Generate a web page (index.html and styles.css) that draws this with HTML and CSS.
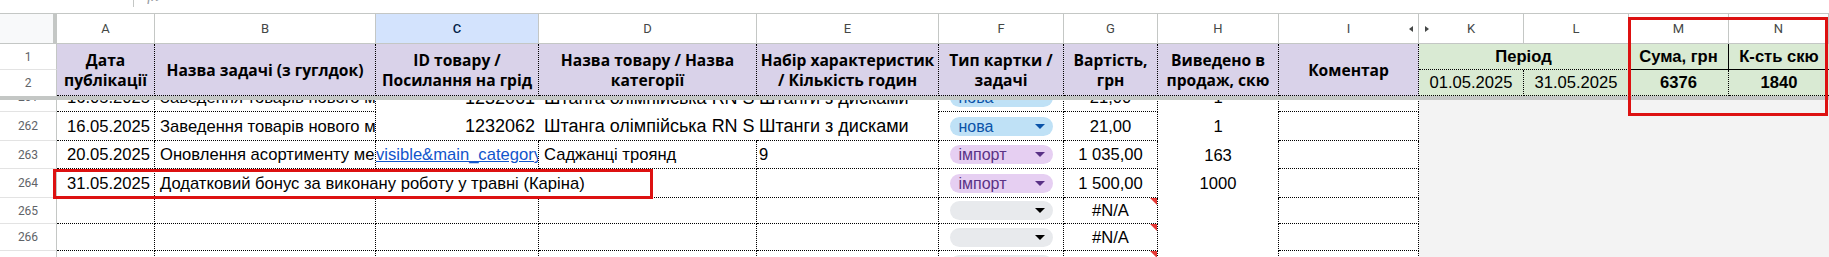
FILE: index.html
```html
<!DOCTYPE html>
<html lang="uk">
<head>
<meta charset="utf-8">
<title>Sheet</title>
<link rel="stylesheet" href="styles.css">
</head>
<body>
<div class="sheet">
  <div class="topbar">
    <div class="namebox"><span>E270</span></div>
    <div class="fx"><span>fx</span></div>
  </div>

  <div class="grid colheads">
    <div class="corner"></div>
    <div class="ch">A</div>
    <div class="ch">B</div>
    <div class="ch sel">C</div>
    <div class="ch">D</div>
    <div class="ch">E</div>
    <div class="ch">F</div>
    <div class="ch">G</div>
    <div class="ch">H</div>
    <div class="ch ch-i">I<span class="arr-l"></span></div>
    <div class="ch ch-k"><span class="arr-r"></span>K</div>
    <div class="ch">L</div>
    <div class="ch">M</div>
    <div class="ch">N</div>
  </div>

  <div class="grid frozen">
    <div class="rh rh1">1</div>
    <div class="hd">Дата<br>публікації</div>
    <div class="hd">Назва задачі (з гуглдок)</div>
    <div class="hd">ID товару /<br>Посилання на грід</div>
    <div class="hd">Назва товару / Назва<br>категорії</div>
    <div class="hd">Набір характеристик<br>/ Кількість годин</div>
    <div class="hd">Тип картки /<br>задачі</div>
    <div class="hd">Вартість,<br>грн</div>
    <div class="hd">Виведено в<br>продаж, скю</div>
    <div class="hd">Коментар</div>
    <div class="gr gr-period">Період</div>
    <div class="gr b solid-r solid-b">Сума, грн</div>
    <div class="gr b solid-b nr">К-сть скю</div>
    <div class="rh rh2">2</div>
    <div class="gr gr-k">01.05.2025</div>
    <div class="gr">31.05.2025</div>
    <div class="gr b">6376</div>
    <div class="gr b nr">1840</div>
  </div>

  <div class="freezebar"></div>

  <div class="body">
    <div class="grid row h29 first">
      <div class="rh">261</div>
      <div class="c r">16.05.2025</div>
      <div class="c">Заведення товарів нового магазину</div>
      <div class="c r nr nb big">1232061</div>
      <div class="c nr nb big">Штанга олімпійська RN S 20 кг</div>
      <div class="c nb e big">Штанги з дисками</div>
      <div class="c f"><span class="chip blue">нова<i></i></span></div>
      <div class="c ctr">21,00</div>
      <div class="c ctr h">1</div>
      <div class="c"></div>
      <div class="gray"></div>
    </div>
    <div class="grid row h29">
      <div class="rh">262</div>
      <div class="c r">16.05.2025</div>
      <div class="c">Заведення товарів нового магазину</div>
      <div class="c r nr big">1232062</div>
      <div class="c nr big">Штанга олімпійська RN S 20 кг</div>
      <div class="c e big">Штанги з дисками</div>
      <div class="c f"><span class="chip blue">нова<i></i></span></div>
      <div class="c ctr">21,00</div>
      <div class="c ctr h">1</div>
      <div class="c"></div>
      <div class="gray"></div>
    </div>
    <div class="grid row h28">
      <div class="rh">263</div>
      <div class="c r">20.05.2025</div>
      <div class="c">Оновлення асортименту меблів</div>
      <div class="c link"><a>visible&amp;main_category=2417</a></div>
      <div class="c">Саджанці троянд</div>
      <div class="c e">9</div>
      <div class="c f"><span class="chip purple">імпорт<i></i></span></div>
      <div class="c ctr">1 035,00</div>
      <div class="c ctr h">163</div>
      <div class="c"></div>
      <div class="gray"></div>
    </div>
    <div class="grid row h29">
      <div class="rh">264</div>
      <div class="c r">31.05.2025</div>
      <div class="c span3">Додатковий бонус за виконану роботу у травні (Каріна)</div>
      <div class="c"></div>
      <div class="c f"><span class="chip purple">імпорт<i></i></span></div>
      <div class="c ctr">1 500,00</div>
      <div class="c ctr h">1000</div>
      <div class="c"></div>
      <div class="gray"></div>
    </div>
    <div class="grid row h26">
      <div class="rh">265</div>
      <div class="c"></div>
      <div class="c"></div>
      <div class="c"></div>
      <div class="c"></div>
      <div class="c"></div>
      <div class="c f"><span class="chip grey"><i></i></span></div>
      <div class="c ctr err">#N/A</div>
      <div class="c h"></div>
      <div class="c"></div>
      <div class="gray"></div>
    </div>
    <div class="grid row h27">
      <div class="rh">266</div>
      <div class="c"></div>
      <div class="c"></div>
      <div class="c"></div>
      <div class="c"></div>
      <div class="c"></div>
      <div class="c f"><span class="chip grey"><i></i></span></div>
      <div class="c ctr err">#N/A</div>
      <div class="c h"></div>
      <div class="c"></div>
      <div class="gray"></div>
    </div>
    <div class="grid row h27">
      <div class="rh">267</div>
      <div class="c"></div>
      <div class="c"></div>
      <div class="c"></div>
      <div class="c"></div>
      <div class="c"></div>
      <div class="c f"><span class="chip grey"><i></i></span></div>
      <div class="c ctr err">#N/A</div>
      <div class="c h"></div>
      <div class="c"></div>
      <div class="gray"></div>
    </div>
  </div>

  <div class="mark mark-sum"></div>
  <div class="mark mark-row"></div>
</div>
</body>
</html>
```

FILE: styles.css
```css
* { box-sizing: border-box; }

body {
  margin: 0;
  background: #fff;
}

.sheet {
  position: relative;
  width: 1829px;
  height: 257px;
  overflow: hidden;
  font-family: "Liberation Sans", Arial, sans-serif;
  font-size: 16.6px;
  color: #000;
}

/* ---------- top (formula bar, scrolled off) ---------- */
.topbar {
  height: 14px;
  border-bottom: 1px solid #c4c7c5;
  display: flex;
  align-items: flex-start;
  overflow: hidden;
}
.namebox {
  width: 134px;
  height: 7px;
  padding-left: 20px;
  border-right: 1px solid #c4c7c5;
  overflow: hidden;
}
.namebox span {
  display: block;
  margin-top: -13px;
  font: 500 15px/16px Roboto, sans-serif;
  color: #1f1f1f;
}
.fx {
  margin-left: 13px;
  height: 4px;
  overflow: hidden;
}
.fx span {
  display: block;
  margin-top: -12px;
  font: italic 16px/16px "Liberation Serif", serif;
  color: #9aa0a6;
}

/* ---------- grid ---------- */
.grid {
  display: grid;
  grid-template-columns: 57px 98px 221px 163px 218px 182px 125px 94px 121px 140px 105px 105px 100px 100px;
}

/* column letters */
.colheads {
  height: 30px;
  border-bottom: 1px solid #c4c7c5;
}
.corner {
  background: #f8f9fa;
  border-right: 4px solid #c4c7c5;
}
.ch {
  display: flex;
  align-items: center;
  justify-content: center;
  border-right: 1px solid #c4c7c5;
  font: 13px Roboto, sans-serif;
  color: #444746;
  position: relative;
}
.ch.sel {
  background: #d3e3fd;
  color: #041e49;
  font-weight: 500;
}
.arr-l {
  position: absolute;
  right: 5px;
  top: 12px;
  border-top: 3px solid transparent;
  border-bottom: 3px solid transparent;
  border-right: 4px solid #444746;
}
.arr-r {
  position: absolute;
  left: 6px;
  top: 12px;
  border-top: 3px solid transparent;
  border-bottom: 3px solid transparent;
  border-left: 4px solid #444746;
}

/* frozen header rows */
.frozen {
  grid-template-rows: 26px 26px;
}
.rh {
  display: flex;
  align-items: center;
  justify-content: center;
  border-right: 1px solid #c4c7c5;
  border-bottom: 1px solid #e3e3e3;
  font: 12px Roboto, sans-serif;
  color: #5f6368;
  background: #fff;
}
.rh1 { grid-column: 1; grid-row: 1; }
.rh2 { grid-column: 1; grid-row: 2; border-bottom: 0; }

.hd {
  grid-row: span 2;
  display: flex;
  align-items: center;
  justify-content: center;
  text-align: center;
  background: #d9d2e9;
  border-right: 1px dotted #000;
  border-bottom: 1px dotted #000;
  font: 700 15.6px/20px "Open Sans", sans-serif;
  white-space: nowrap;
  overflow: hidden;
  padding-top: 1px;
}

.gr {
  display: flex;
  align-items: center;
  justify-content: center;
  background: #d9ead3;
  border-right: 1px dotted #000;
  border-bottom: 1px dotted #000;
  white-space: nowrap;
}
.gr.b { font-weight: 700; }
.gr-period { grid-column: 11 / span 2; grid-row: 1; font-weight: 700; }
.gr-k { grid-column: 11; grid-row: 2; }
.gr.solid-r { border-right: 1px solid #000; }
.gr.solid-b { border-bottom: 1px solid #000; }
.gr.nr { border-right: 0; }

.freezebar {
  height: 4px;
  background: #c4c7c5;
}

/* ---------- body rows ---------- */
.body {
  height: 157px;
  overflow: hidden;
}
.row.first { margin-top: -17px; }
.h29 { height: 29px; }
.h28 { height: 28px; }
.h27 { height: 27px; }
.h26 { height: 26px; }

.c {
  display: flex;
  align-items: center;
  padding: 1px 4px 0 5px;
  border-right: 1px dotted #000;
  border-bottom: 1px dotted #000;
  white-space: nowrap;
  overflow: hidden;
  position: relative;
}
.c.big { font-size: 18px; }
.c.r { justify-content: flex-end; padding-right: 4px; }
.c.ctr { justify-content: center; padding: 1px 0 0; }
.c.nr { border-right: 0; }
.c.nb { border-bottom: 0; }
.c.h { border-bottom: 0; }
.c.e { padding-left: 2px; }
.c.span3 { grid-column: span 3; }
.c.link { padding-left: 0; }
.c.link a {
  color: #1155cc;
  text-decoration: underline;
}
.c.f { justify-content: center; padding: 0; }

.gray {
  grid-column: span 4;
  background: #f3f3f3;
}

/* dropdown chips */
.chip {
  width: 103px;
  height: 19px;
  border-radius: 10px;
  display: flex;
  align-items: center;
  justify-content: space-between;
  padding: 0 8px 0 9px;
  font-size: 16px;
  line-height: 19px;
}
.chip i {
  margin-left: auto;
  width: 0;
  height: 0;
  border-left: 5px solid transparent;
  border-right: 5px solid transparent;
  border-top: 5px solid currentColor;
}
.chip.blue { background: #bfe1f6; color: #0a53a8; }
.chip.purple { background: #e6cff2; color: #5a3286; }
.chip.grey { background: #e8eaed; color: #000; }

/* error note triangle */
.c.err::after {
  content: "";
  position: absolute;
  top: 0;
  right: 0;
  border-top: 7px solid #e53935;
  border-left: 7px solid transparent;
}

/* annotation rectangles */
.mark {
  position: absolute;
  border: 3px solid #dd1111;
  pointer-events: none;
}
.mark-sum { left: 1628px; top: 17px; width: 200px; height: 99px; }
.mark-row { left: 53px; top: 169px; width: 600px; height: 30px; }
```
